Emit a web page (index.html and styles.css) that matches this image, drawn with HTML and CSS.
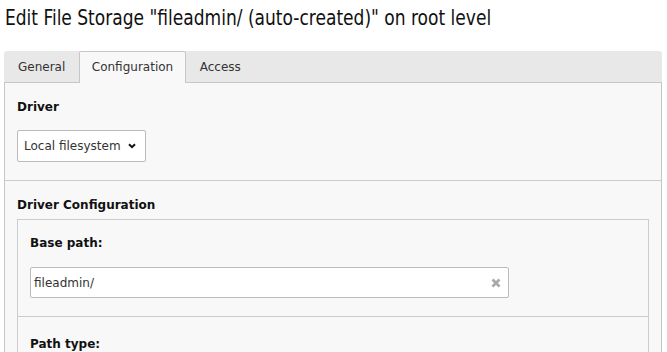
FILE: index.html
```html
<!DOCTYPE html>
<html lang="en">
<head>
<meta charset="utf-8">
<title>Edit File Storage</title>
<link rel="stylesheet" href="styles.css">
</head>
<body>
<div class="page">
  <h1 class="title"><span class="title-text">Edit File Storage "fileadmin/ (auto-created)" on root level</span></h1>
  <div class="tabs">
    <div class="tab">General</div>
    <div class="tab active">Configuration</div>
    <div class="tab">Access</div>
  </div>
  <div class="panel">
    <div class="section">
      <div class="label">Driver</div>
      <div class="select">
        <span>Local filesystem</span>
        <svg class="chev" width="8" height="6" viewBox="0 0 8 6"><polyline points="1,1.2 4,4.2 7,1.2" fill="none" stroke="#111" stroke-width="2"/></svg>
      </div>
    </div>
    <div class="section last">
      <div class="label">Driver Configuration</div>
      <div class="inner">
        <div class="field">
          <div class="label">Base path:</div>
          <div class="input">
            <span>fileadmin/</span>
            <svg class="clear" width="10" height="10" viewBox="0 0 10 10"><path d="M1.5,1.5 L8.5,8.5 M8.5,1.5 L1.5,8.5" stroke="#a8a8a8" stroke-width="2.6"/></svg>
          </div>
        </div>
        <div class="field">
          <div class="label">Path type:</div>
        </div>
      </div>
    </div>
  </div>
</div>
</body>
</html>
```

FILE: styles.css
```css
html, body {
  margin: 0;
  padding: 0;
  background: #ffffff;
}
body {
  font-family: "DejaVu Sans", Verdana, sans-serif;
  font-size: 12px;
  color: #212121;
}
.page {
  display: flex;
  flex-direction: column;
  box-sizing: border-box;
  height: 352px;
  overflow: hidden;
  padding: 0 5px 0 4px;
}
.title {
  flex: none;
  margin: 0;
  height: 51px;
  padding-left: 1px;
  font-family: "DejaVu Sans Condensed", sans-serif;
  font-weight: normal;
  font-size: 22px;
  line-height: 36px;
  color: #111;
  white-space: nowrap;
}
.title-text {
  display: inline-block;
  transform: scaleX(0.862);
  transform-origin: 0 50%;
}
.tabs {
  flex: none;
  display: flex;
  height: 31px;
  background: #e8e8e8;
  border-radius: 3px 3px 0 0;
}
.tab {
  padding: 0 13px;
  line-height: 30px;
  border: 1px solid transparent;
  border-bottom: 0;
  color: #333;
}
.tab.active {
  padding: 0 11.5px;
  background: #f8f8f8;
  border-color: #c6c6c6;
  border-radius: 2px 2px 0 0;
  height: 31px;
  position: relative;
  z-index: 1;
}
.panel {
  flex: 1;
  display: flex;
  flex-direction: column;
  border: 1px solid #c6c6c6;
  border-bottom: 0;
  background: #f8f8f8;
}
.section {
  padding: 16px 12px 18px;
  border-bottom: 1px solid #cccccc;
}
.section.last {
  flex: 1;
  display: flex;
  flex-direction: column;
  padding-bottom: 0;
  border-bottom: 0;
}
.label {
  font-weight: bold;
  line-height: 16px;
  color: #111;
}
.section > .label {
  margin-bottom: 15px;
}
.section.last > .label {
  margin-bottom: 6px;
}
.select {
  display: inline-flex;
  align-items: center;
  justify-content: space-between;
  box-sizing: border-box;
  width: 129px;
  height: 32px;
  padding: 0 9px 0 6px;
  background: #fff;
  border: 1px solid #bbbbbb;
  border-radius: 2px;
  color: #333;
}
.inner {
  flex: 1;
  border: 1px solid #cccccc;
  border-bottom: 0;
}
.field {
  padding: 15px 12px 18px;
  border-bottom: 1px solid #cccccc;
}
.field:last-child {
  border-bottom: 0;
  padding-top: 19px;
}
.field .label {
  margin-bottom: 16px;
}
.input {
  display: flex;
  align-items: center;
  justify-content: space-between;
  box-sizing: border-box;
  width: 479px;
  height: 31px;
  padding: 0 7px 0 3px;
  background: #fff;
  border: 1px solid #bbbbbb;
  border-radius: 2px;
  color: #333;
}
```
